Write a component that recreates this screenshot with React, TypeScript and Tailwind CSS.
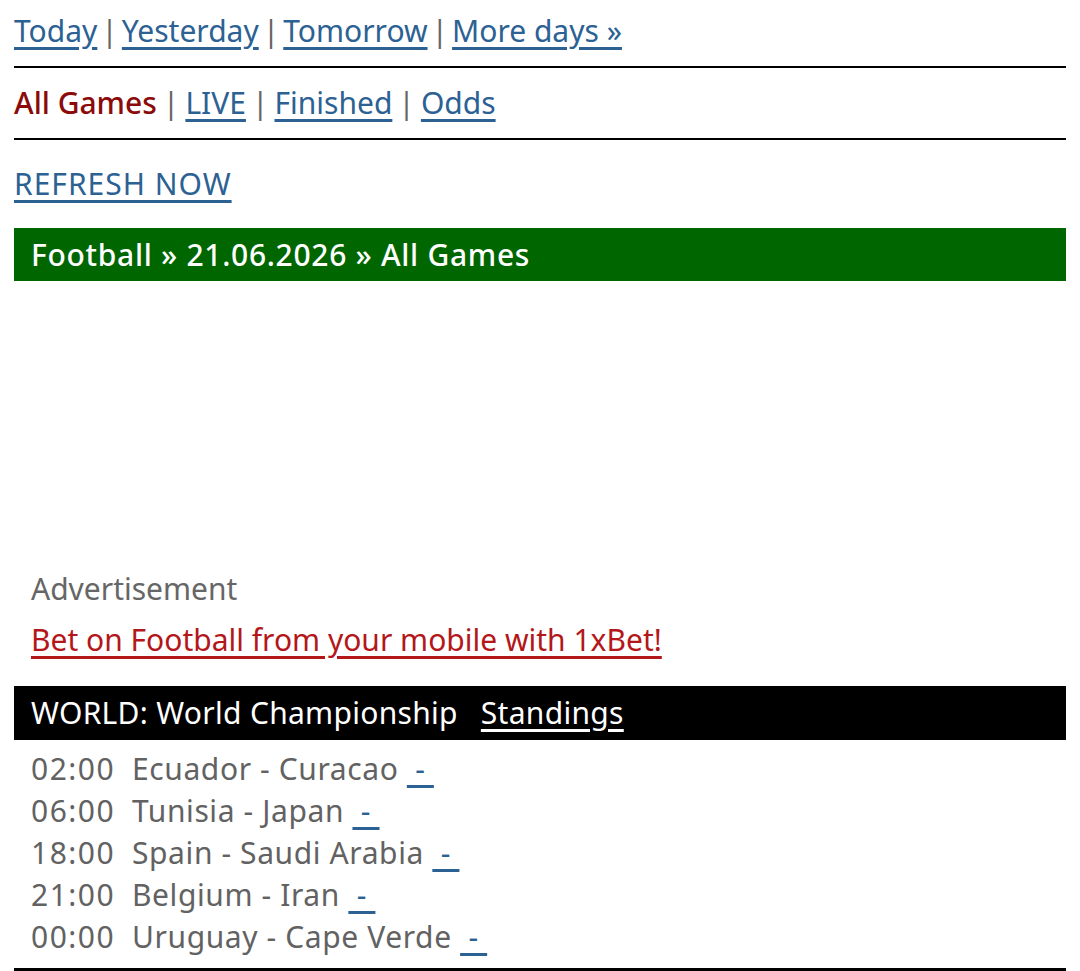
import type { ReactNode } from "react";

const font = { fontFamily: '"Noto Sans", "Open Sans", sans-serif' };

function NavLink({ children, className = "" }: { children: ReactNode; className?: string }) {
  return (
    <a href="#" className={`text-[#2c6193] underline decoration-[3px] underline-offset-[5px] ${className}`}>
      {children}
    </a>
  );
}

function Sep({ wide = false }: { wide?: boolean }) {
  return <span className={`${wide ? "mx-[6px]" : "mx-[4px]"} text-[#666]`}>|</span>;
}

type Match = { time: string; home: string; away: string };

const matches: Match[] = [
  { time: "02:00", home: "Ecuador", away: "Curacao" },
  { time: "06:00", home: "Tunisia", away: "Japan" },
  { time: "18:00", home: "Spain", away: "Saudi Arabia" },
  { time: "21:00", home: "Belgium", away: "Iran" },
  { time: "00:00", home: "Uruguay", away: "Cape Verde" },
];

export default function App() {
  return (
    <div style={font} className="min-h-screen bg-white px-[14px] pt-[10px] text-[30px] leading-[42px] text-black">
      {/* day switcher */}
      <div>
        <NavLink>Today</NavLink>
        <Sep />
        <NavLink>Yesterday</NavLink>
        <Sep />
        <NavLink>Tomorrow</NavLink>
        <Sep />
        <NavLink>More days »</NavLink>
      </div>
      <div className="mt-[14px] h-[2px] bg-black" />

      {/* filter */}
      <div className="mt-[14px]">
        <span className="font-medium text-[#8b0a0a]">All Games</span>
        <Sep wide />
        <NavLink>LIVE</NavLink>
        <Sep wide />
        <NavLink>Finished</NavLink>
        <Sep wide />
        <NavLink>Odds</NavLink>
      </div>
      <div className="mt-[14px] h-[2px] bg-black" />

      <div className="mt-[23px]">
        <NavLink className="tracking-[1px]">REFRESH NOW</NavLink>
      </div>

      <div className="mt-[23px] flex h-[53px] items-center bg-[#006600] px-[17px] font-medium tracking-[0.7px] text-white">
        Football » 21.06.2026 » All Games
      </div>

      {/* ad slot */}
      <div className="h-[287px]" />
      <div className="px-[17px]">
        <div className="text-[#666]">Advertisement</div>
        <div className="mt-[9px]">
          <a href="#" className="text-[#b3171a] underline decoration-[3px] underline-offset-[5px]">
            Bet on Football from your mobile with 1xBet!
          </a>
        </div>
      </div>

      <div className="mt-[25px] flex h-[54px] items-center bg-black px-[17px] tracking-[0.3px] text-white">
        <span>WORLD: World Championship</span>
        <a href="#" className="ml-[23px] underline decoration-[3px] underline-offset-[5px]">
          Standings
        </a>
      </div>

      <div className="mt-[8px] px-[17px] tracking-[0.6px] text-[#626262]">
        {matches.map((m) => (
          <div key={m.time} className="whitespace-pre">
            <span className="tracking-[1.5px]">{m.time}</span>  {m.home} - {m.away}{" "}
            <a href="#" className="text-[#2c6193] underline decoration-[3px] underline-offset-[5px]">
              {"\u00a0-\u00a0"}
            </a>
          </div>
        ))}
      </div>
      <div className="mt-[10px] h-[4px] bg-black" />
    </div>
  );
}
